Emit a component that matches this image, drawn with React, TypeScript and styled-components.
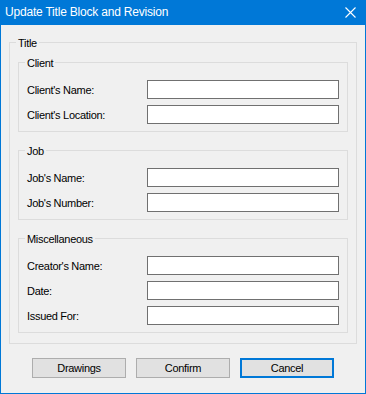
import React from "react";
import styled, { createGlobalStyle } from "styled-components";

const FONT = `"Liberation Sans", Arial, sans-serif`;

const GlobalStyle = createGlobalStyle`
  html, body {
    margin: 0;
    padding: 0;
    background: #f0f0f0;
  }
  body {
    font-family: ${FONT};
  }
`;

const Window = styled.div`
  width: 366px;
  height: 394px;
  box-sizing: border-box;
  border: 1px solid #0078d7;
  border-top: none;
  background: #f0f0f0;
  display: flex;
  flex-direction: column;
  font-family: ${FONT};
  font-size: 11px;
  letter-spacing: -0.3px;
  color: #000;
`;

const TitleBar = styled.div`
  flex: none;
  height: 25px;
  background: #0078d7;
  color: #fff;
  display: flex;
  align-items: center;
  justify-content: space-between;
  padding: 0 9px 0 4px;
`;

const TitleText = styled.span`
  font-size: 12px;
  letter-spacing: -0.2px;
  line-height: 25px;
  white-space: nowrap;
`;

const CloseIcon = styled.svg`
  display: block;
  width: 11px;
  height: 11px;
`;

const Body = styled.div`
  flex: 1;
  display: flex;
  flex-direction: column;
  padding: 10px 8px 0 8px;
`;

const Group = styled.fieldset<{ $outer?: boolean }>`
  margin: 0;
  min-width: 0;
  border: 1px solid #dcdcdc;
  padding: ${(p) => (p.$outer ? "5px 8px 10px" : "10px 8px 7px")};
`;

const Legend = styled.legend`
  padding: 0 2px;
  margin-left: -2px;
  line-height: 15px;
  height: 15px;
  box-sizing: border-box;
  padding-top: 1px;
  white-space: nowrap;
`;

const Stack = styled.div`
  display: flex;
  flex-direction: column;
  gap: 11px;
`;

const FormGrid = styled.div`
  display: grid;
  grid-template-columns: 120px 192px;
  grid-auto-rows: 19px;
  row-gap: 6px;
`;

const Label = styled.label`
  white-space: nowrap;
  line-height: 18px;
  padding-top: 1px;
`;

const TextBox = styled.input`
  box-sizing: border-box;
  width: 192px;
  height: 19px;
  margin: 0;
  padding: 0 2px;
  border: 1px solid #707070;
  background: #fff;
  font-family: ${FONT};
  font-size: 11px;
  outline: none;
`;

const ButtonRow = styled.div`
  display: flex;
  justify-content: center;
  gap: 10px;
  margin-top: 14px;
`;

const Button = styled.button<{ $default?: boolean }>`
  box-sizing: border-box;
  width: 94px;
  height: 20px;
  margin: 0;
  padding: 0;
  background: #e1e1e1;
  border: ${(p) => (p.$default ? "2px solid #0078d7" : "1px solid #adadad")};
  font-family: ${FONT};
  font-size: 11px;
  letter-spacing: -0.3px;
  color: #000;
  line-height: 16px;
`;

type Section = { title: string; fields: string[] };

const sections: Section[] = [
  { title: "Client", fields: ["Client's Name:", "Client's Location:"] },
  { title: "Job", fields: ["Job's Name:", "Job's Number:"] },
  { title: "Miscellaneous", fields: ["Creator's Name:", "Date:", "Issued For:"] },
];

export default function App() {
  return (
    <>
      <GlobalStyle />
      <Window>
        <TitleBar>
          <TitleText>Update Title Block and Revision</TitleText>
          <CloseIcon viewBox="0 0 11 11">
            <path d="M0.5 0.5 L10.5 10.5 M10.5 0.5 L0.5 10.5" stroke="#fff" strokeWidth="1.1" fill="none" />
          </CloseIcon>
        </TitleBar>
        <Body>
          <Group $outer>
            <Legend>Title</Legend>
            <Stack>
              {sections.map((s) => (
                <Group key={s.title}>
                  <Legend>{s.title}</Legend>
                  <FormGrid>
                    {s.fields.map((f) => (
                      <React.Fragment key={f}>
                        <Label>{f}</Label>
                        <TextBox type="text" />
                      </React.Fragment>
                    ))}
                  </FormGrid>
                </Group>
              ))}
            </Stack>
          </Group>
          <ButtonRow>
            <Button>Drawings</Button>
            <Button>Confirm</Button>
            <Button $default>Cancel</Button>
          </ButtonRow>
        </Body>
      </Window>
    </>
  );
}
